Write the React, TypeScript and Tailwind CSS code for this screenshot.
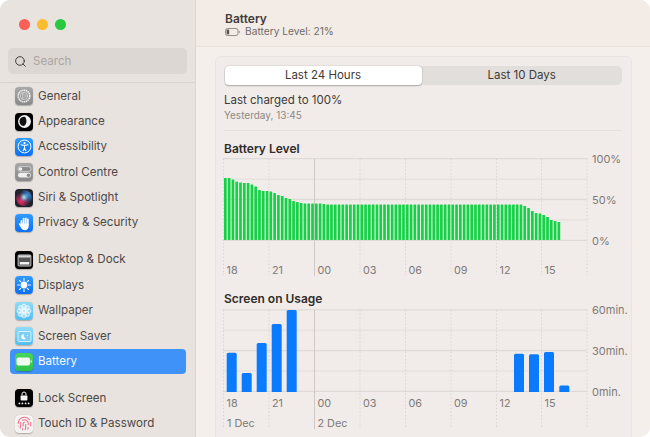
import React from "react";
import { Search, Fingerprint } from "lucide-react";

const I = ({ children, className }: { children?: React.ReactNode; className: string }) => (
  <div className={`w-[18px] h-[18px] rounded-[4px] flex items-center justify-center overflow-hidden shrink-0 shadow-[0_0.5px_1px_rgba(0,0,0,0.25)] ${className}`}>{children}</div>
);

const General = () => (
  <I className="bg-gradient-to-b from-[#a9a8a9] to-[#8b8a8b]">
    <svg width="14" height="14" viewBox="0 0 14 14" fill="none">
      <circle cx="7" cy="7" r="5.8" stroke="#f0f0f0" strokeWidth="1.6" strokeDasharray="1.4 0.5" />
      <circle cx="7" cy="7" r="3.6" stroke="#e8e8e8" strokeWidth="0.7" />
      <path d="M5.6 4.5 9.6 7 5.6 9.5Z" stroke="#e8e8e8" strokeWidth="0.6" />
    </svg>
  </I>
);
const Appearance = () => (
  <I className="bg-black">
    <svg width="15" height="15" viewBox="0 0 14 14">
      <circle cx="7" cy="7" r="6" fill="#f2f2f2" />
      <path d="M7.4 2.6a4.4 4.4 0 0 0-1.4 8.7c1.8-.6 2.8-2.4 2.8-4.3S8.4 3.6 7.4 2.6Z" fill="#111" />
    </svg>
  </I>
);
const Accessibility = () => (
  <I className="bg-gradient-to-b from-[#2f9bff] to-[#0a6ff2]">
    <svg width="15" height="15" viewBox="0 0 14 14" fill="none">
      <circle cx="7" cy="7" r="6" stroke="#fff" strokeWidth="0.9" />
      <circle cx="7" cy="3.9" r="1" fill="#fff" />
      <path d="M3.8 5.4 7 6l3.2-.6M7 6v2.4M7 8.4l-1.3 2.6M7 8.4l1.3 2.6" stroke="#fff" strokeWidth="0.95" strokeLinecap="round" />
    </svg>
  </I>
);
const ControlCentre = () => (
  <I className="bg-gradient-to-b from-[#a8a7a8] to-[#8a898a]">
    <svg width="15" height="14" viewBox="0 0 14 14">
      <rect x="0.5" y="1.6" width="13" height="4.8" rx="2.4" fill="#8c8b8c" stroke="#eee" strokeWidth="0.6" />
      <circle cx="3" cy="4" r="1.8" fill="#f2f2f2" />
      <rect x="0.5" y="7.8" width="13" height="4.8" rx="2.4" fill="#efefef" />
      <circle cx="11" cy="10.2" r="1.8" fill="#8c8b8c" />
    </svg>
  </I>
);
const Siri = () => (
  <I className="bg-[#20222c]">
    <svg width="18" height="18" viewBox="0 0 18 18">
      <defs>
        <radialGradient id="sa" cx="0.32" cy="0.7" r="0.55"><stop offset="0" stopColor="#f0306e" /><stop offset="1" stopColor="#f0306e" stopOpacity="0" /></radialGradient>
        <radialGradient id="sb" cx="0.72" cy="0.32" r="0.5"><stop offset="0" stopColor="#3f8fe8" /><stop offset="1" stopColor="#3f8fe8" stopOpacity="0" /></radialGradient>
        <radialGradient id="sc" cx="0.5" cy="0.45" r="0.3"><stop offset="0" stopColor="#bfeeee" /><stop offset="1" stopColor="#60d0c8" stopOpacity="0" /></radialGradient>
      </defs>
      <circle cx="9" cy="9" r="8" fill="url(#sa)" />
      <circle cx="9" cy="9" r="8" fill="url(#sb)" />
      <circle cx="9" cy="9" r="7" fill="url(#sc)" />
    </svg>
  </I>
);
const Privacy = () => (
  <I className="bg-gradient-to-b from-[#2f9bff] to-[#0a6ff2]">
    <svg width="15" height="15" viewBox="0 0 15 15" fill="#fff">
      <rect x="3.6" y="4" width="1.8" height="6" rx="0.9" />
      <rect x="5.7" y="1.8" width="1.8" height="7" rx="0.9" />
      <rect x="7.8" y="1.4" width="1.8" height="7" rx="0.9" />
      <rect x="9.9" y="2.6" width="1.8" height="7" rx="0.9" />
      <path d="M3.6 7.5h8.1V10c0 2.6-1.6 4.2-4 4.2-1.8 0-2.8-.8-3.6-2.4L1.9 8.4c-.4-.9.7-1.5 1.3-.8l1 1.2Z" />
    </svg>
  </I>
);
const Desktop = () => (
  <I className="bg-black">
    <svg width="15" height="15" viewBox="0 0 14 14">
      <rect x="1" y="1.8" width="12" height="10.4" rx="1" fill="#555" stroke="#d8d8d8" strokeWidth="0.8" />
      <rect x="1.4" y="2.2" width="11.2" height="2" fill="#d8d8d8" />
      <rect x="2.6" y="8.4" width="8.8" height="2.4" rx="0.4" fill="#f2f2f2" />
    </svg>
  </I>
);
const Displays = () => (
  <I className="bg-gradient-to-b from-[#2f9bff] to-[#0a6ff2]">
    <svg width="16" height="16" viewBox="0 0 16 16" fill="none">
      <circle cx="8" cy="8" r="3.4" fill="#fff" />
      <path d="M8 1.6v1.8M8 12.6v1.8M1.6 8h1.8M12.6 8h1.8M3.5 3.5l1.2 1.2M11.3 11.3l1.2 1.2M3.5 12.5l1.2-1.2M11.3 4.7l1.2-1.2" stroke="#fff" strokeWidth="1.1" strokeLinecap="round" />
    </svg>
  </I>
);
const Wallpaper = () => (
  <I className="bg-gradient-to-b from-[#8edcf7] to-[#52bdf0]">
    <svg width="16" height="16" viewBox="0 0 16 16" fill="#ffffff" fillOpacity="0.35" stroke="#fff" strokeWidth="0.6">
      {[0, 45, 90, 135, 180, 225, 270, 315].map((a) => (
        <ellipse key={a} cx="8" cy="4" rx="2.2" ry="3" transform={`rotate(${a} 8 8)`} />
      ))}
    </svg>
  </I>
);
const ScreenSaver = () => (
  <I className="bg-gradient-to-b from-[#8edcf7] to-[#52bdf0]">
    <svg width="15" height="15" viewBox="0 0 15 15" fill="none">
      <rect x="1" y="2.5" width="13" height="10" rx="1" fill="#7fd0f4" stroke="#eafaff" strokeWidth="0.8" />
      <path d="M7 5.2a2.6 2.6 0 1 0 1.8 4.2A3 3 0 0 1 7 5.2Z" fill="#fff" />
      <circle cx="10.6" cy="6.4" r="0.5" fill="#fff" />
    </svg>
  </I>
);
const BatteryIcon = () => (
  <I className="bg-gradient-to-b from-[#46d65c] to-[#2ec24a]">
    <svg width="16" height="9" viewBox="0 0 16 9">
      <rect x="0.5" y="0.5" width="13.5" height="8" rx="2" fill="#f2fbf2" />
      <path d="M14.6 3c.8.2 1.2.8 1.2 1.5s-.4 1.3-1.2 1.5Z" fill="#f2fbf2" />
    </svg>
  </I>
);
const Lock = () => (
  <I className="bg-black">
    <svg width="16" height="16" viewBox="0 0 16 16" fill="none">
      <rect x="4.6" y="5.4" width="6.8" height="5.2" rx="0.8" fill="#f4f4f4" />
      <path d="M6 5.6V4a2 2 0 0 1 4 0v1.6" stroke="#f4f4f4" strokeWidth="1" />
      {[3.4, 6.4, 9.6, 12.6].map((x) => <circle key={x} cx={x} cy="13.4" r="0.9" fill="#f4f4f4" />)}
    </svg>
  </I>
);
const Touch = () => (
  <I className="bg-[#f6f4f3]">
    <Fingerprint size={15} stroke="#ea6f88" strokeWidth={1.7} />
  </I>
);

const Row = ({ icon, label, active }: { icon: React.ReactNode; label: string; active?: boolean }) => (
  <div className={`h-[25.4px] ml-[9.5px] w-[176.5px] pl-[5.5px] flex items-center gap-[5px] rounded-[4px] text-[11.6px] ${active ? "bg-[#3f93f8] text-[#f6f8fb]" : "text-[#4d4947]"}`}>
    {icon}
    <span>{label}</span>
  </div>
);

const F = "Inter, 'Liberation Sans', sans-serif";
const vx = [223.5, 269, 314.5, 360, 405.5, 451, 496.5, 541.5, 587];
const labels: [string, number][] = [["18", 226.5], ["21", 272], ["00", 317.5], ["03", 363], ["06", 408.5], ["09", 454], ["12", 499.5], ["15", 544.5]];

const Grid = ({ top, bottom, ly, axis }: { top: number; bottom: number; ly: number; axis: string[] }) => {
  const ys = [top, top + 20.4, top + 40.8, top + 61.2, top + 81.6];
  return (
    <>
      {ys.map((y, i) => (
        <line key={y} x1="223" x2="587" y1={y} y2={y} stroke={i % 2 === 0 ? "#dedad7" : "#e2dedb"} strokeWidth={i % 2 === 0 ? 1.3 : 1} />
      ))}
      {vx.map((x) => (
        <line key={x} x1={x} x2={x} y1={top} y2={x === 314.5 ? bottom + 1 : bottom} stroke={x === 314.5 ? "#cdc9c6" : "#d8d4d1"} strokeWidth="1" strokeDasharray={x === 314.5 ? undefined : "1.5 2"} />
      ))}
      {labels.map(([t, x]) => (
        <text key={t} x={x} y={ly} fontSize="10.8" fill="#7f7a77" fontFamily={F}>{t}</text>
      ))}
      {axis.map((t, i) => (
        <text key={t} x="592" y={top + 4.4 + i * 40.8} fontSize="11" fill="#7f7a77" fontFamily={F}>{t}</text>
      ))}
    </>
  );
};

const tops = [178, 178, 179.5, 181.5, 182.5, 183, 183, 184.5, 186.5, 190, 191, 191, 191.5, 193, 195, 196, 198, 199, 201, 202, 203, 203.5, 203.5, 203.5, 203.5, 203.5, 204];
const tail = [206, 208, 211, 213, 213.5, 215, 217, 220, 221, 222];
const green: number[] = [...tops];
while (green.length < 79) green.push(204.5);
green.push(...tail);

const BatteryChart = () => (
  <svg className="block ml-[-1px] mt-[-7px]" width="408" height="128" viewBox="223 149 408 128">
    <Grid top={158.7} bottom={275} ly={274} axis={["100%", "50%", "0%"]} />
    {green.map((t, i) => (
      <rect key={i} x={224 + i * 3.79} y={t} width="2.7" height={240 - t} fill="#14d245" rx="0.4" />
    ))}
  </svg>
);

const blue: [number, number][] = [[226.7, 351.7], [241.7, 372], [256.7, 342], [271.7, 323], [286.7, 309], [514, 352.7], [529, 353.3], [544, 351], [559.3, 384.5]];
const UsageChart = () => (
  <svg className="block ml-[-1px] mt-[-6px]" width="408" height="131" viewBox="223 299 408 131">
    <Grid top={308.8} bottom={427} ly={406} axis={["60min.", "30min.", "0min."]} />
    {blue.map(([x, t]) => (
      <path key={x} d={`M${x} 391V${t + 1.5}q0-1.5 1.5-1.5h7q1.5 0 1.5 1.5V391Z`} fill="#0a7aff" />
    ))}
    <text x="227" y="426" fontSize="10.8" fill="#7f7a77" fontFamily={F}>1 Dec</text>
    <text x="317.5" y="426" fontSize="10.8" fill="#7f7a77" fontFamily={F}>2 Dec</text>
  </svg>
);

export default function App() {
  return (
    <div className="w-[650px] h-[437px] bg-white overflow-hidden" style={{ fontFamily: F }}>
      <div className="w-[650px] h-[437px] rounded-[10px] overflow-hidden flex bg-[#f4efeb]">
        <aside className="w-[196px] shrink-0 bg-[#e8e3df] border-r border-[#dcd7d3] flex flex-col">
          <div className="flex gap-[7px] pl-[18.5px] pt-[18.5px] h-[48px]">
            <span className="w-[11px] h-[11px] rounded-full bg-[#fb5f57]" />
            <span className="w-[11px] h-[11px] rounded-full bg-[#fdbb2e]" />
            <span className="w-[11px] h-[11px] rounded-full bg-[#28c83f]" />
          </div>
          <div className="mx-[8px] h-[26px] rounded-[5px] bg-[#dcd7d3] flex items-center pl-[6px] gap-[6px] text-[11.6px] text-[#aaa5a2]">
            <Search size={13} stroke="#3f3c3a" strokeWidth={1.8} />
            <span className="pt-[1px]">Search</span>
          </div>
          <div className="mt-[8px] border-t border-[#d8d3cf]" />
          <div className="flex flex-col pt-[0.5px]">
            <Row icon={<General />} label="General" />
            <Row icon={<Appearance />} label="Appearance" />
            <Row icon={<Accessibility />} label="Accessibility" />
            <Row icon={<ControlCentre />} label="Control Centre" />
            <Row icon={<Siri />} label="Siri & Spotlight" />
            <Row icon={<Privacy />} label="Privacy & Security" />
            <div className="h-[11.5px]" />
            <Row icon={<Desktop />} label="Desktop & Dock" />
            <Row icon={<Displays />} label="Displays" />
            <Row icon={<Wallpaper />} label="Wallpaper" />
            <Row icon={<ScreenSaver />} label="Screen Saver" />
            <Row icon={<BatteryIcon />} label="Battery" active />
            <div className="h-[11.5px]" />
            <Row icon={<Lock />} label="Lock Screen" />
            <Row icon={<Touch />} label="Touch ID & Password" />
          </div>
        </aside>
        <main className="flex-1 flex flex-col min-w-0">
          <header className="h-[47px] shrink-0 bg-[#f2ebe6] border-b border-[#e6e1dd] pl-[29px] pt-[11px]">
            <div className="text-[12px] leading-[15px] font-semibold text-[#3f3c3a]">Battery</div>
            <div className="flex items-center gap-[5px] text-[10.2px] leading-[13px] mt-[-1px] text-[#6f6b68]">
              <svg width="15" height="8" viewBox="0 0 15 8" fill="none">
                <rect x="0.5" y="0.5" width="12.5" height="7" rx="2" stroke="#7a7673" strokeWidth="0.8" />
                <rect x="1.6" y="1.6" width="2.6" height="4.8" rx="0.8" fill="#5a5653" />
                <path d="M13.8 2.8c.6.2.9.7.9 1.2s-.3 1-.9 1.2Z" fill="#7a7673" />
              </svg>
              <span>Battery Level: 21%</span>
            </div>
          </header>
          <div className="flex-1 pl-[19px] pr-[18px] pt-[9px] min-h-0">
            <section className="w-[417px] h-[400px] bg-[#f1ecea] border border-[#e9e4e0] rounded-t-[6px] pl-[8px] pt-[9px]">
              <div className="w-[398px] h-[19px] rounded-[5px] bg-[#e2dedb] flex text-[11.5px] text-[#3d3a38]">
                <div className="w-[197px] ml-[0.5px] rounded-[4px] bg-white shadow-[0_0.5px_1.5px_rgba(0,0,0,0.3)] flex items-center justify-center">Last 24 Hours</div>
                <div className="flex-1 flex items-center justify-center">Last 10 Days</div>
              </div>
              <div className="text-[11.5px] leading-[15px] text-[#3d3a38] mt-[7.5px]">Last charged to 100%</div>
              <div className="text-[10px] leading-[13px] text-[#8d8885] mt-[1px]">Yesterday, 13:45</div>
              <div className="border-t border-[#e6e1de] mt-[8.5px] w-[398px]" />
              <div className="text-[12px] leading-[15px] font-semibold text-[#2f2c2a] mt-[10px]">Battery Level</div>
              <BatteryChart />
              <div className="text-[12px] leading-[15px] font-semibold text-[#2f2c2a] mt-[13.5px]">Screen on Usage</div>
              <UsageChart />
            </section>
          </div>
        </main>
      </div>
    </div>
  );
}
